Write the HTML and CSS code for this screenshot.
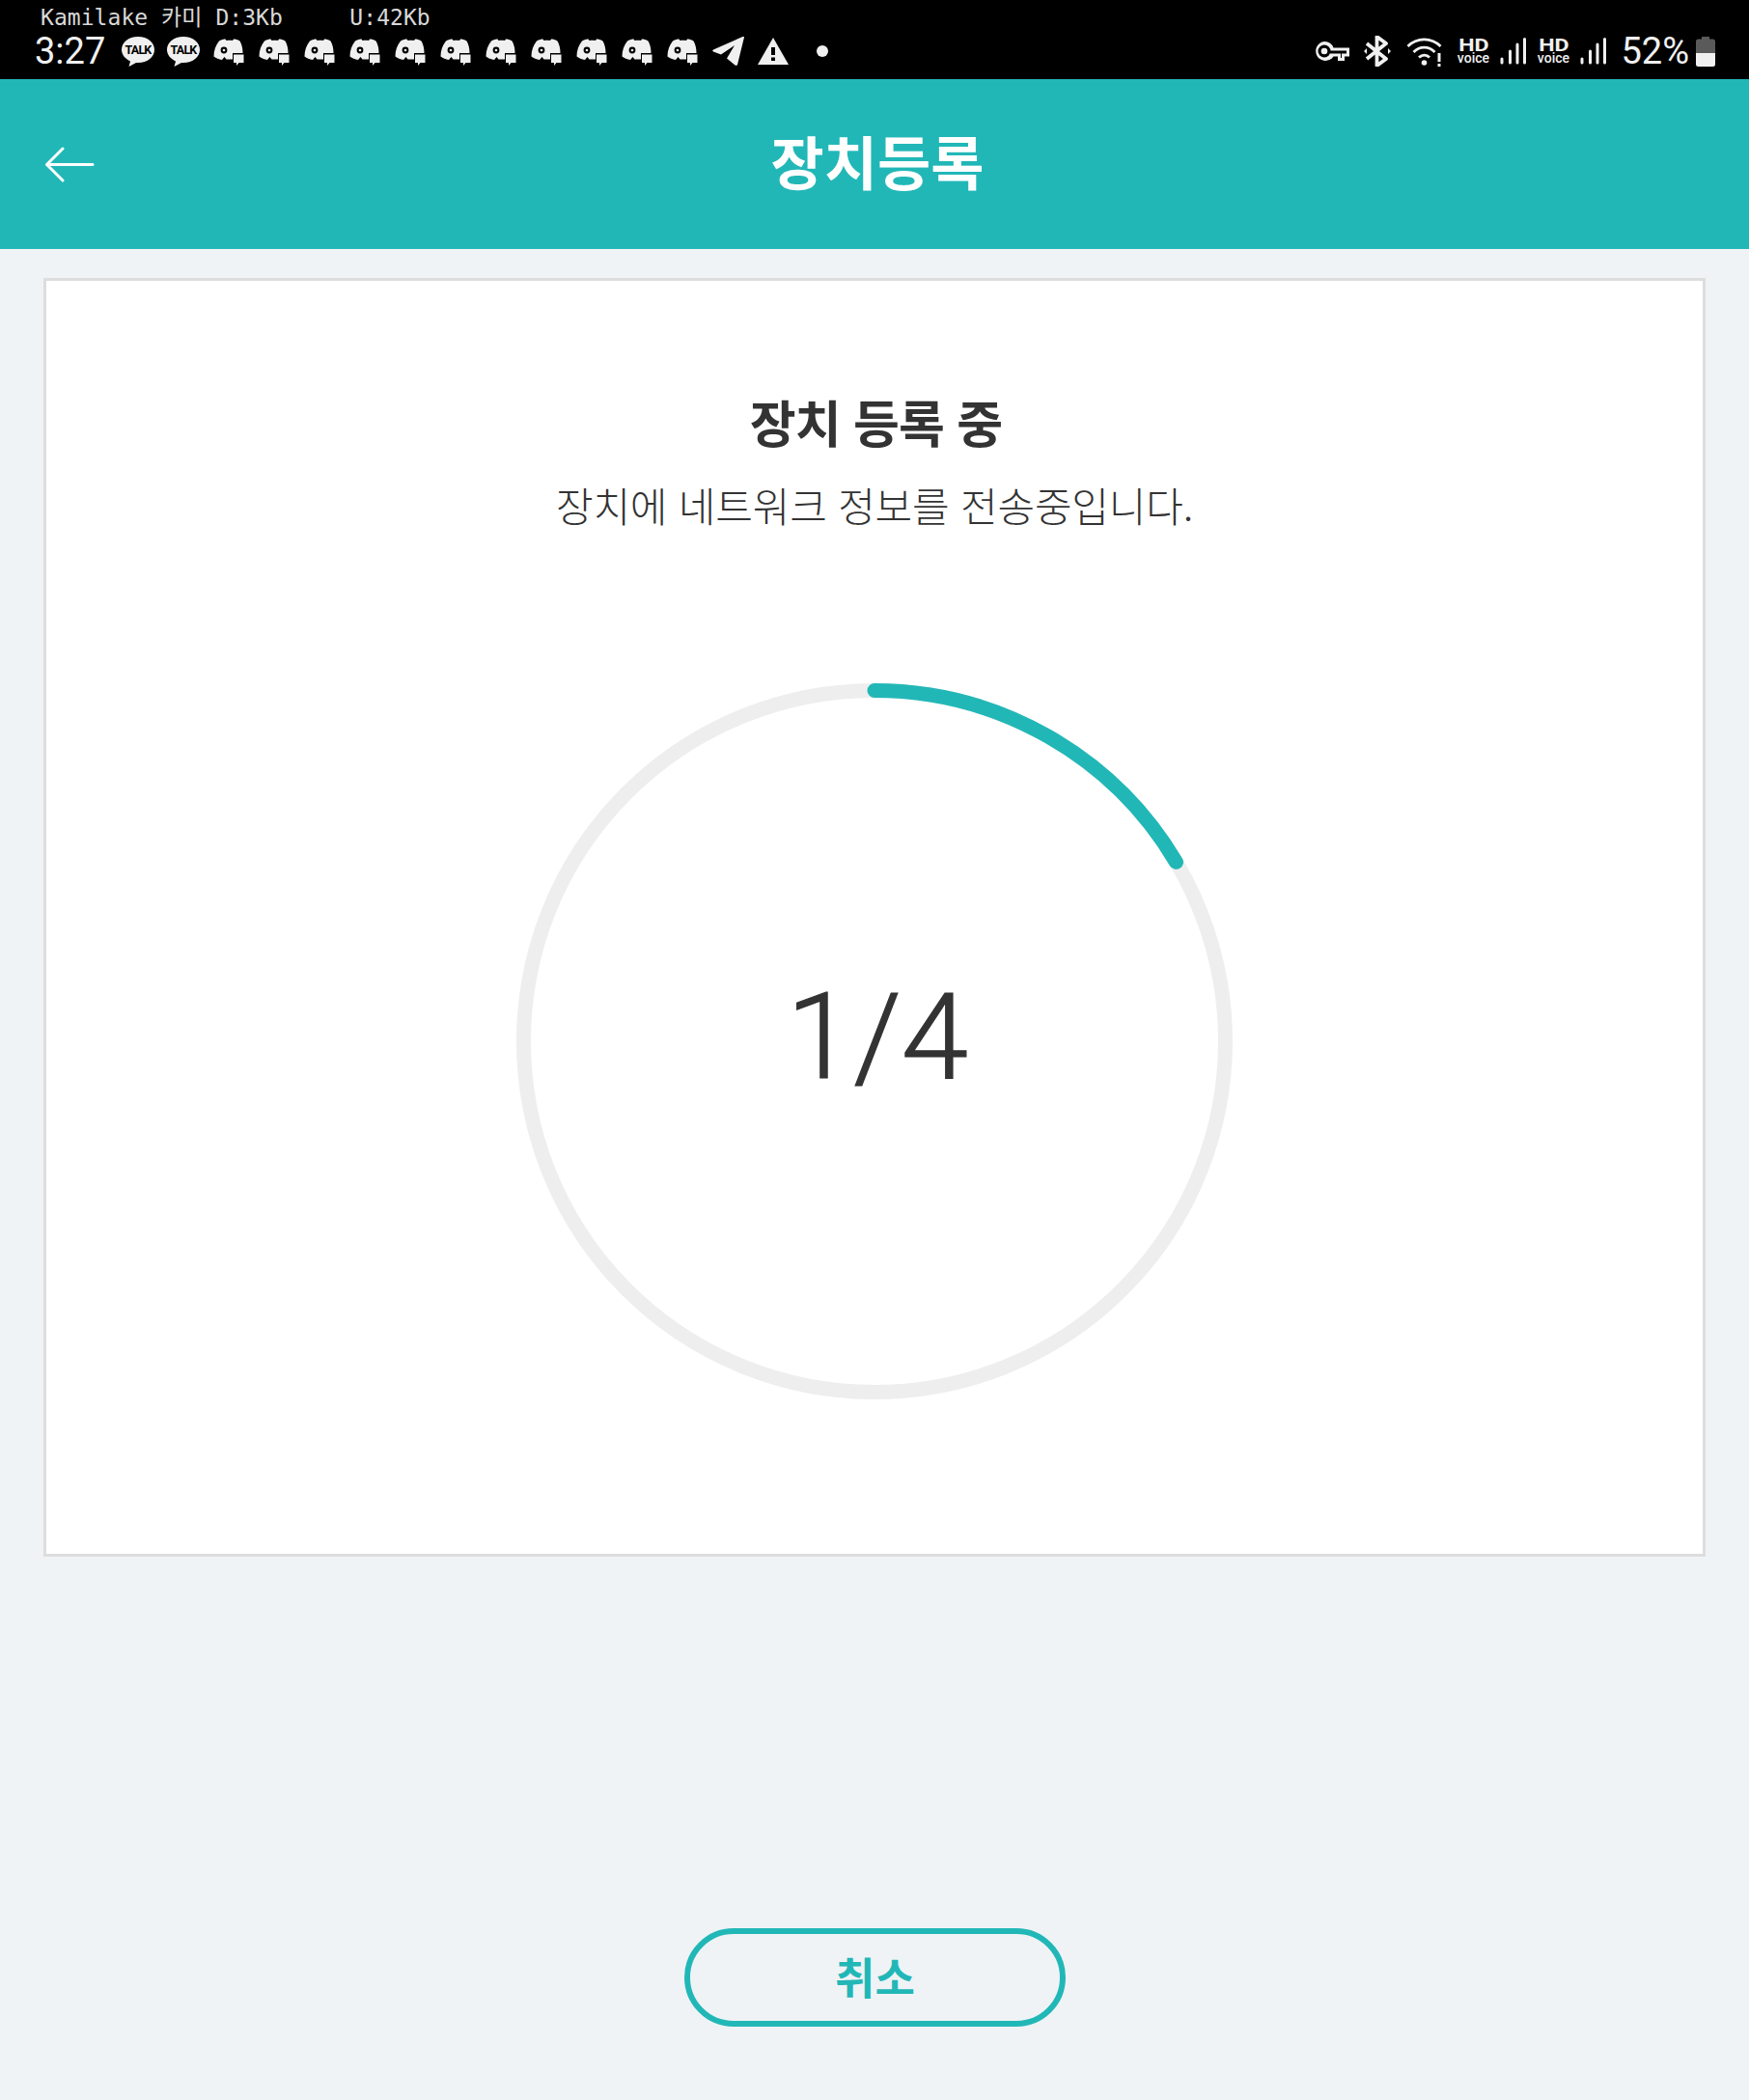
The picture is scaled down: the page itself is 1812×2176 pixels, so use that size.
FILE: index.html
```html
<!DOCTYPE html>
<html lang="ko">
<head>
<meta charset="utf-8">
<title>장치등록</title>
<link rel="stylesheet" href="styles.css">
</head>
<body>
<svg class="defs" width="0" height="0" aria-hidden="true">
  <symbol id="discord" viewBox="0 0 32 28">
    <path d="M6 2.500C8.500 1 11 .5 12.500 .5L13.500 2C15.500 1.700 18 1.700 20 2L21 .5C23 .5 25 1 27.500 2.500C29.500 6 30.500 10 30.500 15H20V21.500H13.500L11.500 19C10.500 20 10 21 9 22C5.500 21.500 3 20.500 .5 18.500C.5 12 2.500 7 6 2.500Z" fill="#f0f0f0"/>
    <circle cx="11" cy="12" r="3.400" fill="#000"/>
    <circle cx="11" cy="12" r="1.300" fill="#f0f0f0"/>
    <path d="M21 16.500H31.500V25H26.500L24 28V25H21Z" fill="#f0f0f0"/>
  </symbol>
  <symbol id="signal" viewBox="0 0 27 28">
    <path d="M2 22V26M10.500 14V26M18 7V26M25.500 1.500V26" stroke="#f0f0f0" stroke-width="3" stroke-linecap="round" fill="none"/>
  </symbol>
</svg>

<header class="status">
  <div class="status-net">Kamilake 카미 D:3Kb     U:42Kb</div>
  <div class="status-row">
    <span class="clock">3:27</span>
    <div class="notif">
      <svg class="i-talk" viewBox="0 0 36 32"><path d="M18 1C8 1 1 7 1 14.500C1 20 5 24 10 26.500L8.500 32L16 28C16.700 28 17.300 28 18 28C28 28 35 22 35 14.500C35 7 28 1 18 1Z" fill="#f0f0f0"/><text x="18" y="19" class="talk-text" text-anchor="middle">TALK</text></svg>
      <svg class="i-talk" viewBox="0 0 36 32"><path d="M18 1C8 1 1 7 1 14.500C1 20 5 24 10 26.500L8.500 32L16 28C16.700 28 17.300 28 18 28C28 28 35 22 35 14.500C35 7 28 1 18 1Z" fill="#f0f0f0"/><text x="18" y="19" class="talk-text" text-anchor="middle">TALK</text></svg>
      <svg class="i-dc"><use href="#discord"/></svg>
      <svg class="i-dc"><use href="#discord"/></svg>
      <svg class="i-dc"><use href="#discord"/></svg>
      <svg class="i-dc"><use href="#discord"/></svg>
      <svg class="i-dc"><use href="#discord"/></svg>
      <svg class="i-dc"><use href="#discord"/></svg>
      <svg class="i-dc"><use href="#discord"/></svg>
      <svg class="i-dc"><use href="#discord"/></svg>
      <svg class="i-dc"><use href="#discord"/></svg>
      <svg class="i-dc"><use href="#discord"/></svg>
      <svg class="i-dc"><use href="#discord"/></svg>
      <svg class="i-tg" viewBox="0 0 34 30"><path d="M33 0.500L26 29C25.500 30 24.500 30 23.500 29.500L15 22.500L23 9L9 18.500L1 15.500C0 15 0 14 1 13.500L31.500 0C32.500 -.3 33.200 0 33 .5Z" fill="#f0f0f0"/></svg>
      <svg class="i-warn" viewBox="0 0 32 28"><path d="M16 0L32 28H0Z" fill="#f0f0f0"/><path d="M14 10H18V18H14ZM14 20.500H18V24H14Z" fill="#000"/></svg>
      <span class="dot"></span>
    </div>
    <div class="sys">
      <svg class="i-key" viewBox="0 0 36 20"><path d="M10 0A10 10 0 0 1 19.500 6.500H36V15.500H31V20H24V15.500H19.500A10 10 0 1 1 10 0Z" fill="#f0f0f0"/><circle cx="10" cy="10" r="6.500" fill="#000"/><circle cx="10" cy="10" r="3.300" fill="#f0f0f0"/><path d="M16 9.500H33V12.500H28V17H27V12.500H16Z" fill="#000"/></svg>
      <svg class="i-bt" viewBox="0 0 28 32"><path d="M3 8L23 24L13.500 31V1L23 8L3 24" stroke="#f0f0f0" stroke-width="3.800" fill="none" stroke-linejoin="round"/><path d="M0 16L3 13V19ZM28 16L25 13V19Z" fill="#f0f0f0"/></svg>
      <svg class="i-wifi" viewBox="0 0 37 31"><path d="M1.500 10C11 .5 26 .5 35.500 10M7.500 16C14 9.500 23 9.500 29.500 16M13 21.500C16.500 18.500 21 18.500 24 21.500" stroke="#f0f0f0" stroke-width="2.800" fill="none"/><circle cx="18.500" cy="27" r="2.800" fill="#f0f0f0"/><path d="M32.500 17H35.500V26H32.500ZM32.500 28H35.500V31H32.500Z" fill="#f0f0f0"/></svg>
      <div class="hd"><b>HD</b><span>voice</span></div>
      <svg class="i-signal"><use href="#signal"/></svg>
      <div class="hd"><b>HD</b><span>voice</span></div>
      <svg class="i-signal"><use href="#signal"/></svg>
      <span class="pct">52%</span>
      <svg class="i-bat" viewBox="0 0 20 31"><path d="M6 0H14V2.500H17.500Q20 2.500 20 5V17H0V5Q0 2.500 2.500 2.500H6Z" fill="#5a5a5a"/><path d="M0 17H20V28.500Q20 31 17.500 31H2.500Q0 31 0 28.500Z" fill="#f0f0f0"/></svg>
    </div>
  </div>
</header>

<nav class="appbar">
  <svg class="back" viewBox="0 0 52 37"><path d="M50 18.500H2.500M19 2L2.500 18.500L19 35" stroke="#fff" stroke-width="3" stroke-linecap="round" stroke-linejoin="round" fill="none"/></svg>
  <h1 class="appbar-title">장치등록</h1>
</nav>

<main class="content">
  <section class="card">
    <h2 class="card-title">장치 등록 중</h2>
    <p class="card-sub">장치에 네트워크 정보를 전송중입니다.</p>
    <div class="progress">
      <svg class="ring" viewBox="0 0 742 742">
        <circle cx="371" cy="371" r="363.500" class="ring-track"/>
        <path d="M371 7.500A363.500 363.500 0 0 1 683.500 185.300" class="ring-value"/>
      </svg>
      <div class="progress-label">1/4</div>
    </div>
  </section>
  <button class="cancel" type="button">취소</button>
</main>
</body>
</html>
```

FILE: styles.css
```css
* { box-sizing: border-box; }
html, body { margin: 0; padding: 0; }
body {
  width: 1812px;
  height: 2176px;
  display: flex;
  flex-direction: column;
  background: #eff3f6;
  font-family: "Noto Sans CJK KR", "Noto Sans", sans-serif;
  overflow: hidden;
}
.defs { position: absolute; }
.talk-text { font: 700 12.500px "Roboto", sans-serif; fill: #000; letter-spacing: -.8px; }

.status {
  height: 82px;
  flex: none;
  background: #000;
  color: #f0f0f0;
  padding: 5px 35px 0 36px;
}
.status-net {
  height: 26px;
  padding-left: 6px;
  font: 23px/26px "DejaVu Sans Mono", "Noto Sans CJK KR", monospace;
  letter-spacing: .05px;
  white-space: pre;
  color: #d8d8d8;
}
.status-row { height: 44px; display: flex; align-items: center; }
.clock { font: 400 38px/1 "Roboto", sans-serif; width: 74px; flex: none; }
.notif { display: flex; align-items: center; padding-left: 15px; }
.i-talk { width: 36px; height: 32px; margin-right: 11px; flex: none; }
.i-talk + .i-talk { margin-right: 12.500px; }
.i-dc { width: 32px; height: 28px; margin-right: 15px; flex: none; margin-top: 2px; }
.i-tg { width: 34px; height: 30px; margin-right: 13px; flex: none; }
.i-warn { width: 32px; height: 28px; margin-right: 29px; flex: none; }
.dot { width: 12px; height: 12px; border-radius: 50%; background: #f0f0f0; }

.sys { margin-left: auto; display: flex; align-items: center; }
.i-key { width: 36px; height: 20px; margin-right: 15px; flex: none; }
.i-bt { width: 28px; height: 32px; margin-right: 16px; flex: none; }
.i-wifi { width: 37px; height: 31px; margin-right: 15px; flex: none; }
.hd { width: 34px; display: flex; flex-direction: column; align-items: center; margin-right: 11px; font-family: "Roboto", sans-serif; }
.hd b { font-size: 19px; line-height: 15px; font-weight: 700; transform: scaleX(1.22); }
.hd span { font-size: 14px; line-height: 13px; font-weight: 500; }
.i-signal { width: 27px; height: 28px; margin-right: 11px; flex: none; }
.pct { font: 400 38px/1 "Roboto", sans-serif; margin-left: 4px; }
.i-bat { width: 20px; height: 31px; margin-left: 7px; flex: none; }

.appbar {
  height: 176px;
  flex: none;
  background: #22b7b7;
  display: grid;
  grid-template-columns: 1fr auto 1fr;
  align-items: center;
  padding-left: 46px;
}
.back { width: 52px; height: 37px; }
.appbar-title { margin: 0 40px 8px 0; color: #fff; font-size: 60px; line-height: 1; font-weight: 700; }

.content { flex: 1; padding: 30px 45px 0; display: flex; flex-direction: column; align-items: center; }
.card {
  width: 100%;
  height: 1325px;
  background: #fff;
  border: 3px solid #dddddd;
  display: flex;
  flex-direction: column;
  align-items: center;
  padding-top: 110px;
  color: #333;
}
.card-title { margin: 0 0 0 3px; font-size: 52px; line-height: 72px; font-weight: 700; letter-spacing: -1px; }
.card-sub { margin: 20px 0 0; font-size: 42px; line-height: 60px; font-weight: 300; letter-spacing: -.2px; }
.progress { display: grid; place-items: center; margin-top: 155px; }
.ring, .progress-label { grid-area: 1 / 1; }
.ring { width: 742px; height: 742px; display: block; }
.ring-track { fill: none; stroke: #eeeeee; stroke-width: 15; }
.ring-value { fill: none; stroke: #22b7b7; stroke-width: 15; stroke-linecap: round; }
.progress-label { font-family: "Roboto", sans-serif; font-size: 125px; line-height: 1; font-weight: 300; color: #333; margin: 0 0 10px 6px; -webkit-text-stroke: 1.200px #333; }

.cancel {
  margin-top: 385px;
  width: 395px;
  height: 102px;
  background: transparent;
  border: 6px solid #22b7b7;
  border-radius: 51px;
  color: #22b7b7;
  font-family: inherit;
  font-size: 45px;
  font-weight: 700;
  padding: 0 0 3px 1px;
}
```
